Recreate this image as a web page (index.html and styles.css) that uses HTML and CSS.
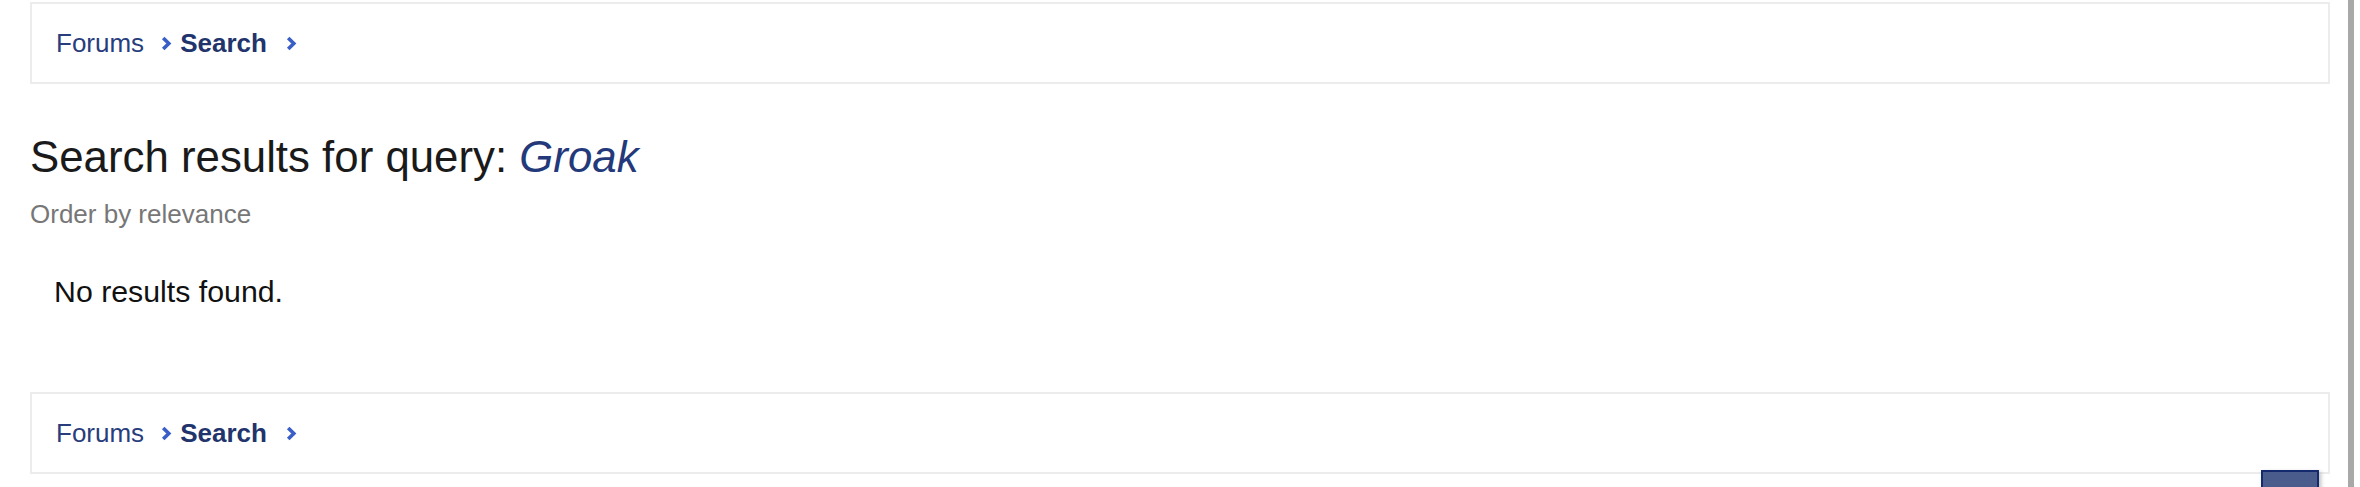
FILE: index.html
```html
<!DOCTYPE html>
<html lang="en">
<head>
<meta charset="utf-8">
<title>Search results</title>
<link rel="stylesheet" href="styles.css">
</head>
<body>
<div class="page">
  <nav class="crumbs">
    <a class="crumb" href="#">Forums</a>
    <svg class="chev" width="11" height="15" viewBox="0 0 11 15"><polyline points="2.2,2 7.8,7.5 2.2,13" fill="none" stroke="#3a5ec8" stroke-width="3.6"/></svg>
    <a class="crumb current" href="#">Search</a>
    <svg class="chev last" width="11" height="15" viewBox="0 0 11 15"><polyline points="2.2,2 7.8,7.5 2.2,13" fill="none" stroke="#3a5ec8" stroke-width="3.6"/></svg>
  </nav>
  <h1 class="title">Search results for query: <em class="query">Groak</em></h1>
  <div class="order">Order by relevance</div>
  <div class="noresults">No results found.</div>
  <nav class="crumbs bottom">
    <a class="crumb" href="#">Forums</a>
    <svg class="chev" width="11" height="15" viewBox="0 0 11 15"><polyline points="2.2,2 7.8,7.5 2.2,13" fill="none" stroke="#3a5ec8" stroke-width="3.6"/></svg>
    <a class="crumb current" href="#">Search</a>
    <svg class="chev last" width="11" height="15" viewBox="0 0 11 15"><polyline points="2.2,2 7.8,7.5 2.2,13" fill="none" stroke="#3a5ec8" stroke-width="3.6"/></svg>
  </nav>
</div>
<div class="scrollbar"></div>
<a class="totop" href="#"></a>
</body>
</html>
```
FILE: styles.css
```css
html, body {
  margin: 0;
  background: #fff;
}
body {
  font-family: "Liberation Sans", Arial, sans-serif;
  color: #1a1a1a;
  height: 487px;
  overflow: hidden;
  position: relative;
}
.page {
  padding: 2px 30px 0 30px;
}
.crumbs {
  box-sizing: border-box;
  height: 82px;
  border: 2px solid #ececec;
  display: flex;
  align-items: center;
  padding-left: 24px;
}
.crumb {
  font-size: 26px;
  color: #283d7c;
  text-decoration: none;
  line-height: 30px;
}
.crumb.current {
  font-weight: bold;
  color: #22346c;
}
.chev {
  display: block;
  margin: 0 8px 0 17px;
}
.chev.last {
  margin-left: 19px;
}
.title {
  margin: 47px 0 0 0;
  font-size: 43.8px;
  line-height: 52px;
  font-weight: normal;
  color: #1a1a1a;
}
.query {
  color: #24397a;
}
.order {
  margin-top: 16px;
  font-size: 26px;
  line-height: 30px;
  color: #777;
}
.noresults {
  margin-top: 45px;
  padding-left: 24px;
  font-size: 30.3px;
  line-height: 36px;
  color: #111;
}
.crumbs.bottom {
  margin-top: 82px;
}
.scrollbar {
  position: absolute;
  top: 0;
  left: 2348px;
  width: 6px;
  height: 487px;
  background: #a8a8a8;
}
.totop {
  position: absolute;
  left: 2261px;
  top: 470px;
  width: 58px;
  height: 40px;
  box-sizing: border-box;
  background: #4a5c8b;
  border: 2px solid #15296e;
  box-shadow: 2px 2px 4px rgba(0,0,0,0.25);
}
```
